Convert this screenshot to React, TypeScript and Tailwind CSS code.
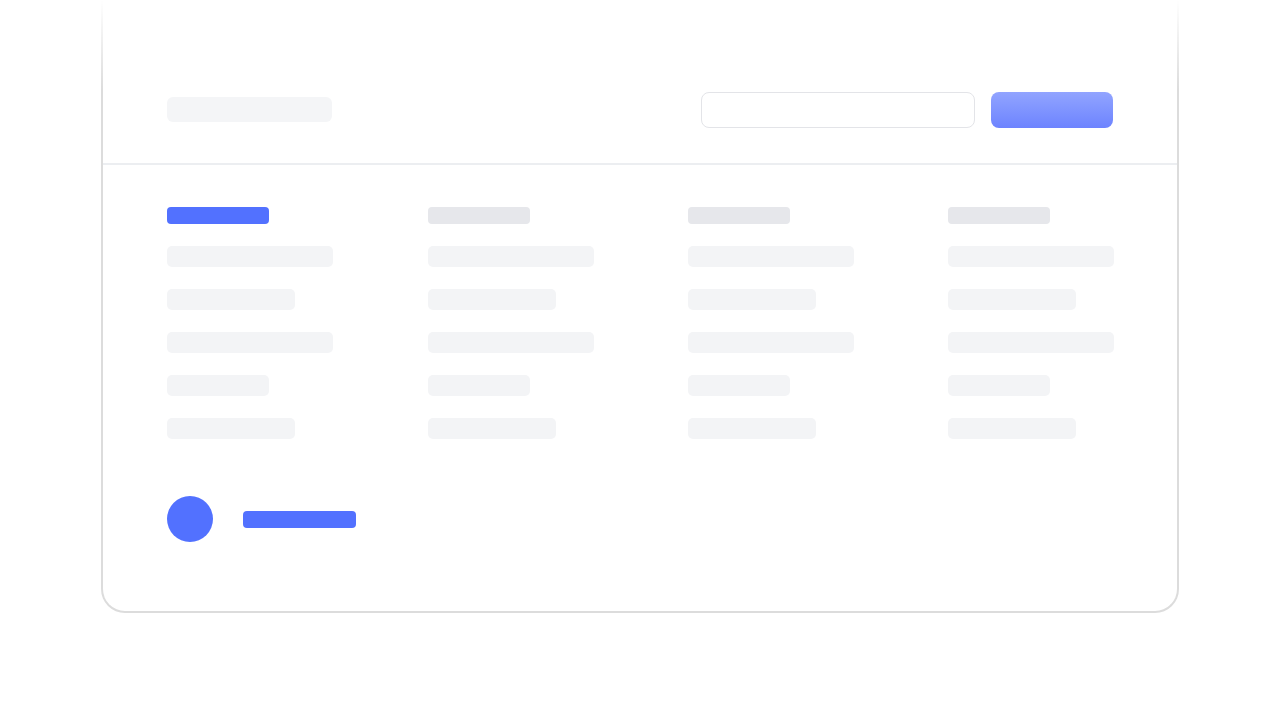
import React from 'react';

const columns = [
  { active: true, rows: [166, 128, 166, 102, 128] },
  { active: false, rows: [166, 128, 166, 102, 128] },
  { active: false, rows: [166, 128, 166, 102, 128] },
  { active: false, rows: [166, 128, 166, 102, 128] },
];

function Column({ active, rows }: { active: boolean; rows: number[] }) {
  return (
    <div className="flex flex-col gap-[22px]">
      <div
        className={
          active
            ? 'h-[17px] w-[102px] rounded-[4px] bg-[#5271ff]'
            : 'h-[17px] w-[102px] rounded-[4px] bg-[#e6e7eb]'
        }
      />
      {rows.map((w, i) => (
        <div
          key={i}
          className="h-[21px] rounded-[5px] bg-[#f3f4f6]"
          style={{ width: w }}
        />
      ))}
    </div>
  );
}

export default function App() {
  return (
    <div className="min-h-[720px] w-full bg-white">
      <div className="relative ml-[101px] w-[1078px] rounded-b-[24px] border-x-2 border-b-2 border-[#dcdcdc] bg-white">
        {/* header */}
        <div className="flex items-center justify-between border-b-2 border-[#eceef1] pl-[64px] pr-[64px] pt-[92px] pb-[35px]">
          <div className="mb-[2px] h-[25px] w-[165px] rounded-[6px] bg-[#f4f5f7]" />
          <div className="flex items-center gap-4">
            <div className="h-[36px] w-[274px] rounded-[8px] border border-[#e3e4e8] bg-white" />
            <div className="h-[36px] w-[122px] rounded-[8px] bg-gradient-to-b from-[#92a4ff] to-[#6d83ff]" />
          </div>
        </div>

        {/* body */}
        <div className="pl-[64px] pr-[64px] pt-[42px] pb-[69px]">
          <div className="grid grid-cols-[166px_167px_166px_166px] justify-between">
            {columns.map((c, i) => (
              <div key={i} className={i > 0 ? 'pl-px' : ''}>
                <Column active={c.active} rows={c.rows} />
              </div>
            ))}
          </div>

          <div className="mt-[57px] flex items-center gap-[30px]">
            <div className="h-[46px] w-[46px] rounded-full bg-[#5271ff]" />
            <div className="h-[17px] w-[113px] rounded-[4px] bg-[#5271ff]" />
          </div>
        </div>

        {/* top fade over the side borders */}
        <div className="pointer-events-none absolute -left-[2px] -right-[2px] top-0 h-[90px] bg-gradient-to-b from-white to-transparent" />
      </div>
    </div>
  );
}
